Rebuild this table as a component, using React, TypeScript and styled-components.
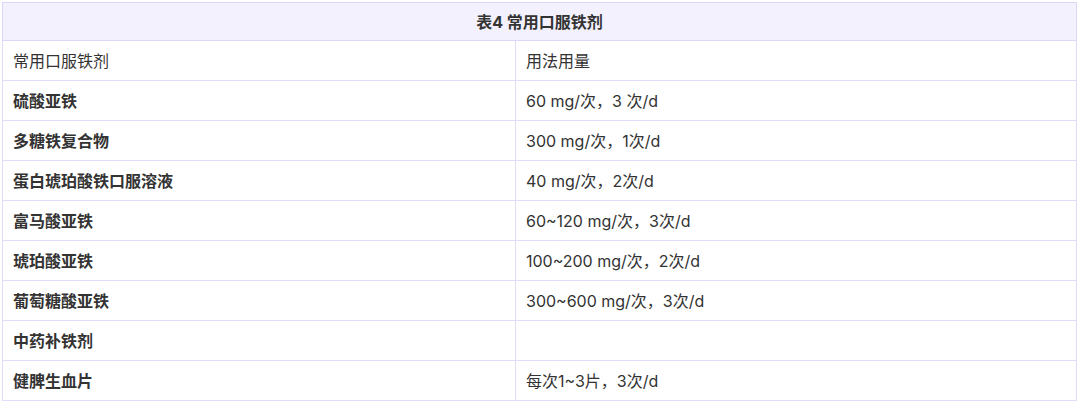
import React from "react";
import styled, { createGlobalStyle } from "styled-components";

const GlobalStyle = createGlobalStyle`
  html, body {
    margin: 0;
    padding: 0;
    background: #ffffff;
  }
  body {
    font-family: Inter, "Noto Sans CJK SC", sans-serif;
    color: #333333;
  }
`;

const Page = styled.div`
  padding: 2px 3px 0 2px;
`;

const Table = styled.table`
  width: 1075px;
  border-collapse: collapse;
  table-layout: fixed;
  border: 1px solid #ddd6f8;
  font-size: 16px;
  line-height: 20px;
`;

const Caption = styled.th`
  height: 38px;
  padding: 0 10px;
  background: #f4f1fe;
  border: 1px solid #ddd6f8;
  text-align: center;
  font-weight: 700;
  color: #333333;
  box-sizing: border-box;
`;

const Cell = styled.td<{ $bold?: boolean }>`
  height: 40px;
  padding: 0 10px;
  border: 1px solid #e2dcfa;
  text-align: left;
  vertical-align: middle;
  font-weight: ${(p) => (p.$bold ? 700 : 400)};
  color: #333333;
  box-sizing: border-box;
`;

const rows: { name: string; dose: string; bold: boolean }[] = [
  { name: "常用口服铁剂", dose: "用法用量", bold: false },
  { name: "硫酸亚铁", dose: "60 mg/次，3 次/d", bold: true },
  { name: "多糖铁复合物", dose: "300 mg/次，1次/d", bold: true },
  { name: "蛋白琥珀酸铁口服溶液", dose: "40 mg/次，2次/d", bold: true },
  { name: "富马酸亚铁", dose: "60~120 mg/次，3次/d", bold: true },
  { name: "琥珀酸亚铁", dose: "100~200 mg/次，2次/d", bold: true },
  { name: "葡萄糖酸亚铁", dose: "300~600 mg/次，3次/d", bold: true },
  { name: "中药补铁剂", dose: "", bold: true },
  { name: "健脾生血片", dose: "每次1~3片，3次/d", bold: true },
];

export default function App() {
  return (
    <>
      <GlobalStyle />
      <Page>
        <Table>
          <colgroup>
            <col style={{ width: "513px" }} />
            <col />
          </colgroup>
          <thead>
            <tr>
              <Caption colSpan={2}>表4 常用口服铁剂</Caption>
            </tr>
          </thead>
          <tbody>
            {rows.map((r) => (
              <tr key={r.name}>
                <Cell $bold={r.bold}>{r.name}</Cell>
                <Cell>{r.dose}</Cell>
              </tr>
            ))}
          </tbody>
        </Table>
      </Page>
    </>
  );
}
